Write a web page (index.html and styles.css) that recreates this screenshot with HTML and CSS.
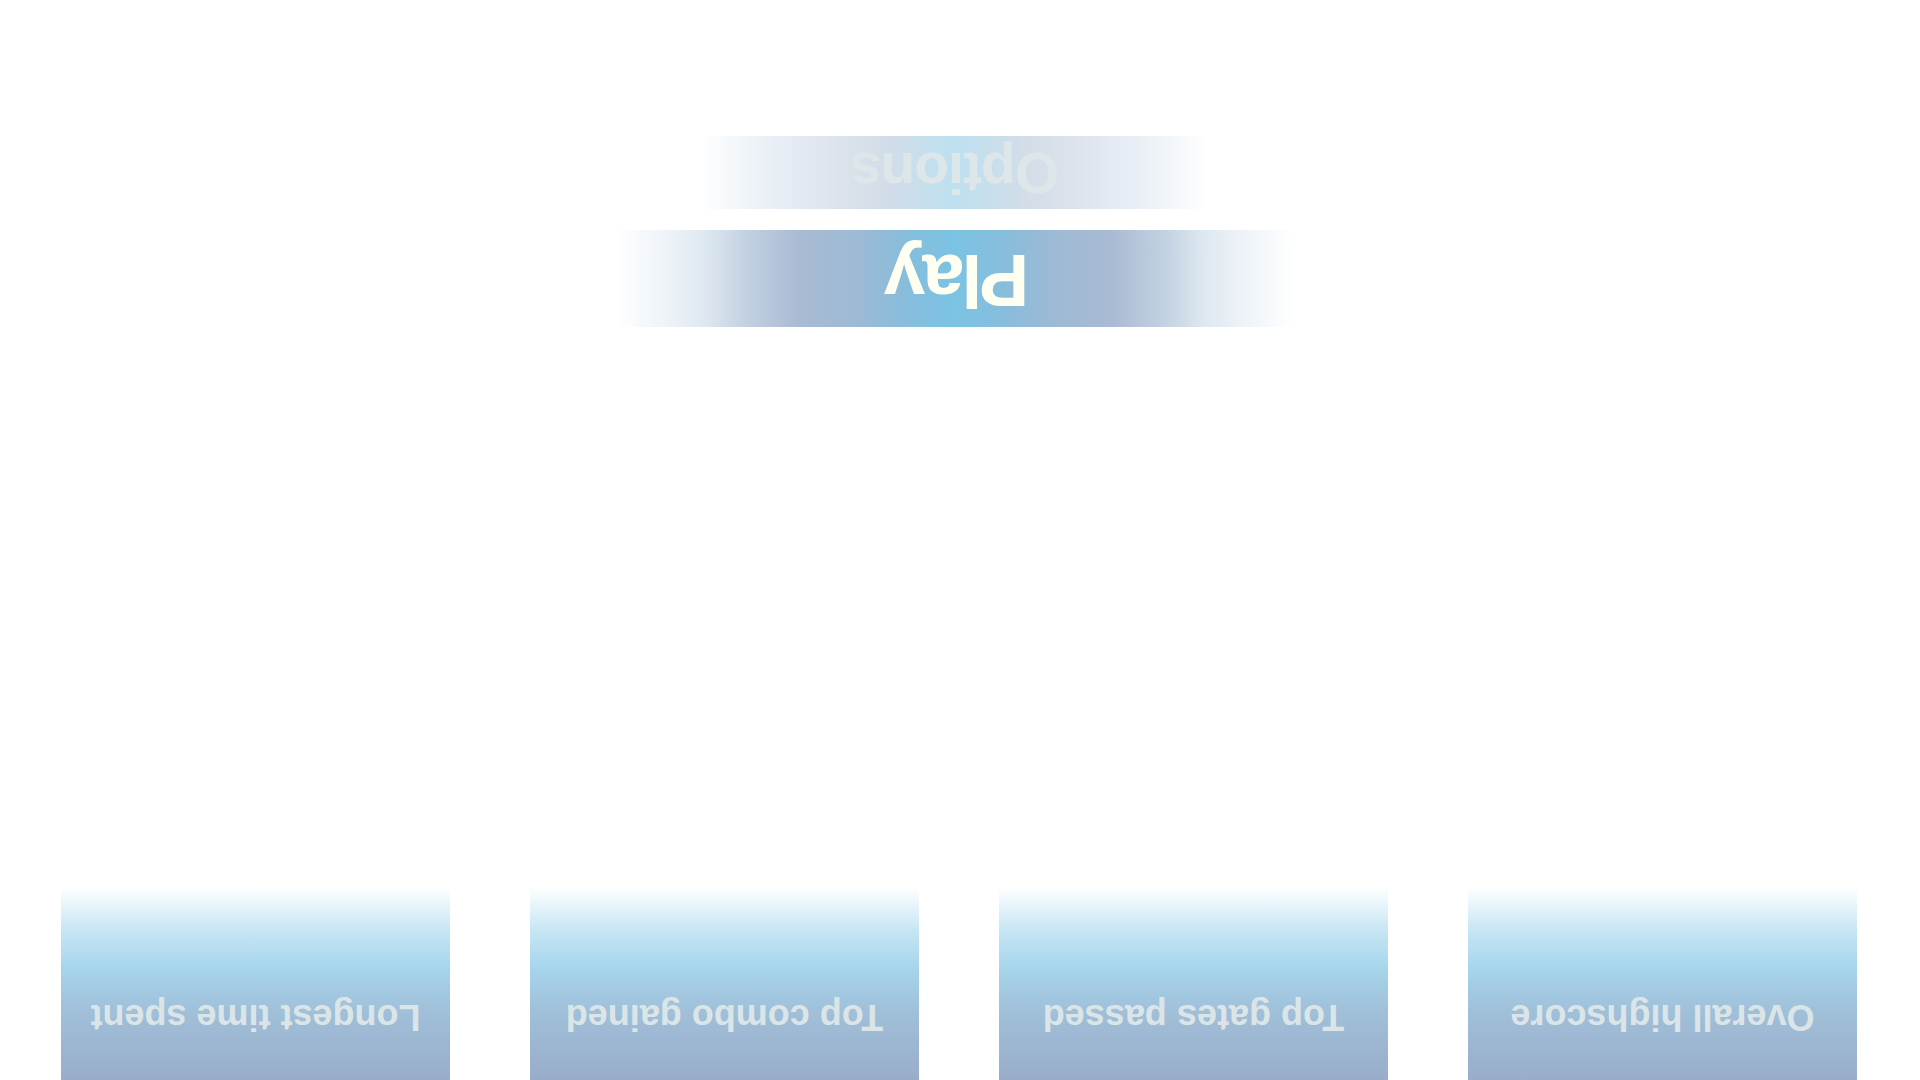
FILE: index.html
```html
<!DOCTYPE html>
<html lang="en">
<head>
<meta charset="utf-8">
<title>Menu</title>
<link rel="stylesheet" href="styles.css">
</head>
<body>
<div class="screen">
  <div class="stats">
    <div class="card"><span class="card-label">Overall highscore</span></div>
    <div class="card"><span class="card-label">Top gates passed</span></div>
    <div class="card"><span class="card-label">Top combo gained</span></div>
    <div class="card"><span class="card-label">Longest time spent</span></div>
  </div>
  <div class="menu">
    <div class="btn btn-play">Play</div>
    <div class="btn btn-options">Options</div>
  </div>
</div>
</body>
</html>
```
FILE: styles.css
```css
html, body {
  margin: 0;
  padding: 0;
  background: #ffffff;
  overflow: hidden;
}

.screen {
  width: 1920px;
  height: 1080px;
  transform: rotate(180deg);
  display: flex;
  flex-direction: column;
  font-family: "Liberation Sans", Arial, sans-serif;
  font-weight: bold;
}

.stats {
  display: flex;
  gap: 80px;
  padding-left: 63px;
  height: 193px;
}

.card {
  width: 389px;
  height: 193px;
  background: linear-gradient(to bottom, #99adc9 0%, #a0bfd9 35%, #a6d5ec 58%, #c8e6f4 78%, #ffffff 100%);
  display: flex;
  justify-content: center;
  box-sizing: border-box;
  padding-top: 41px;
}

.card-label {
  font-size: 36px;
  line-height: 44px;
  color: #dbe5e7;
  letter-spacing: 0;
}

.menu {
  display: flex;
  flex-direction: column;
  align-items: center;
  padding-left: 10px;
  margin-top: 560px;
}

.btn {
  display: flex;
  justify-content: center;
  align-items: center;
}

.btn-play {
  width: 680px;
  height: 97px;
  background: linear-gradient(to right,
    rgba(255,255,255,0) 0%,
    #eff4f9 7%,
    #dfe9f1 13%,
    #c3d2e2 19%,
    #aabad3 27%,
    #9cbad5 36%,
    #87bddc 43%,
    #7bc3e4 50%,
    #87bddc 57%,
    #9cbad5 64%,
    #aabad3 73%,
    #c3d2e2 81%,
    #dfe9f1 87%,
    #eff4f9 93%,
    rgba(255,255,255,0) 100%);
  color: #fefff0;
  font-size: 75px;
  letter-spacing: -3px;
  line-height: 97px;
  padding-bottom: 4px;
  padding-right: 6px;
  box-sizing: border-box;
}

.btn-options {
  margin-top: 21px;
  width: 510px;
  height: 73px;
  background: linear-gradient(to right,
    rgba(255,255,255,0) 0%,
    #f2f6fa 8%,
    #e8eef5 15%,
    #dbe2ea 28%,
    #d1dde8 37%,
    #bde0f0 50%,
    #d1dde8 63%,
    #dbe2ea 72%,
    #e8eef5 85%,
    #f2f6fa 92%,
    rgba(255,255,255,0) 100%);
  color: #dde7ea;
  font-size: 57px;
  letter-spacing: -1px;
  line-height: 73px;
}
```
